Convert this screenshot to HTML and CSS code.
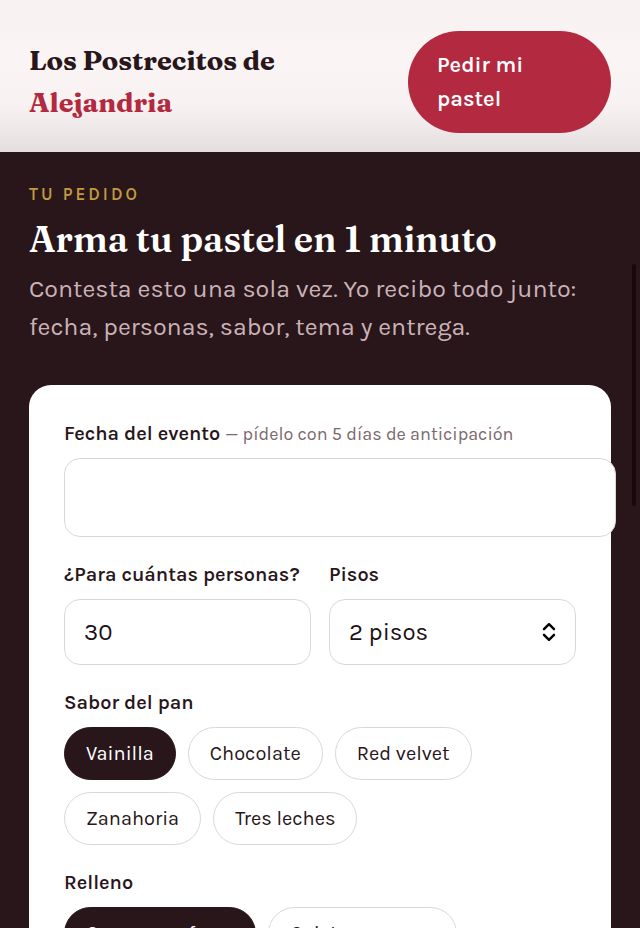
FILE: index.html
```html
<!DOCTYPE html>
<html lang="es">
<head>
<meta charset="utf-8">
<meta name="viewport" content="width=device-width, initial-scale=1">
<title>Los Postrecitos de Alejandria</title>
<link rel="stylesheet" href="styles.css">
</head>
<body>
<header class="topbar">
  <a class="brand" href="#inicio">Los Postrecitos de <span class="brand-accent">Alejandria</span></a>
  <a class="cta" href="#pedido">Pedir mi pastel</a>
</header>
<main class="order" id="pedido">
  <p class="eyebrow">TU PEDIDO</p>
  <h1 class="title">Arma tu pastel en 1 minuto</h1>
  <p class="lead">Contesta esto una sola vez. Yo recibo todo junto: fecha, personas, sabor, tema y entrega.</p>
  <form class="card">
    <div class="field">
      <label class="label" for="fecha">Fecha del evento <span class="hint">— pídelo con 5 días de anticipación</span></label>
      <input class="control control-date" id="fecha" type="text">
    </div>
    <div class="row">
      <div class="field">
        <label class="label" for="personas">¿Para cuántas personas?</label>
        <input class="control" id="personas" type="text" inputmode="numeric" value="30">
      </div>
      <div class="field">
        <label class="label" for="pisos">Pisos</label>
        <div class="select-wrap">
          <select class="control" id="pisos">
            <option>1 piso</option>
            <option selected>2 pisos</option>
            <option>3 pisos</option>
          </select>
          <svg class="chevrons" viewBox="0 0 14 20" aria-hidden="true"><path d="M2 7.2 7 2.2 12 7.2M2 12.8 7 17.8 12 12.8"/></svg>
        </div>
      </div>
    </div>
    <div class="field" role="group" aria-labelledby="sabor">
      <span class="label" id="sabor">Sabor del pan</span>
      <div class="chips">
        <button class="chip chip-on" type="button">Vainilla</button>
        <button class="chip" type="button">Chocolate</button>
        <button class="chip" type="button">Red velvet</button>
        <button class="chip" type="button">Zanahoria</button>
        <button class="chip" type="button">Tres leches</button>
      </div>
    </div>
    <div class="field" role="group" aria-labelledby="relleno">
      <span class="label" id="relleno">Relleno</span>
      <div class="chips">
        <button class="chip chip-on" type="button">Crema con fresa</button>
        <button class="chip" type="button">Cajeta con nuez</button>
      </div>
    </div>
  </form>
</main>
<div class="scroll-thumb"></div>
</body>
</html>
```
FILE: styles.css
```css
*, *::before, *::after { box-sizing: border-box; }

body {
  margin: 0;
  height: 100vh;
  overflow: hidden;
  display: flex;
  flex-direction: column;
  background: #28161a;
  color: #28161a;
  font-family: Karla, Roboto, sans-serif;
}

.topbar {
  flex: none;
  display: flex;
  align-items: center;
  justify-content: space-between;
  gap: 96px;
  padding: 31px 29px 19px;
  background: linear-gradient(#f7f1f1 0, #faf5f4 36%, #f8f3f2 68%, #e5dedf 100%);
}

.brand {
  flex: 1;
  font-family: Fraunces, "Liberation Serif", serif;
  font-size: 27px;
  font-weight: 700;
  line-height: 42px;
  color: #28161a;
  text-decoration: none;
}

.brand-accent { display: block; color: #b3293f; }

.cta {
  width: 203px;
  padding: 17px 72px 17px 29px;
  border-radius: 51px;
  background: #b3293f;
  color: #fff;
  font-size: 22px;
  font-weight: 600;
  line-height: 34px;
  text-decoration: none;
}

.order { flex: none; padding: 31px 29px; }

.eyebrow {
  margin: 0;
  color: #c39b3f;
  font-size: 17px;
  font-weight: 600;
  line-height: 22px;
  letter-spacing: 3px;
}

.title {
  margin: 10px 0 7px;
  color: #fff;
  font-family: Fraunces, "Liberation Serif", serif;
  font-size: 36px;
  font-weight: 600;
  line-height: 48px;
}

.lead {
  margin: 0;
  color: #cbb2b7;
  font-size: 25px;
  line-height: 38px;
}

.card {
  display: flex;
  flex-direction: column;
  gap: 24px;
  margin-top: 39px;
  padding: 35px;
  border-radius: 22px;
  background: #fff;
}

.field { min-width: 0; }

.label {
  display: block;
  margin-bottom: 10px;
  font-size: 20px;
  font-weight: 600;
  line-height: 28px;
}

.hint { color: #7d686d; font-size: 18px; font-weight: 400; }

.control {
  display: block;
  width: 100%;
  height: 66px;
  padding: 0 19px;
  border: 1px solid #ddd6d7;
  border-radius: 16px;
  background: #fff;
  color: #1b1214;
  font-family: inherit;
  font-size: 24px;
  appearance: none;
}

.control-date { box-sizing: content-box; height: 77px; }

.row {
  display: grid;
  grid-template-columns: 1fr 1fr;
  gap: 18px;
}

.select-wrap { display: grid; align-items: center; }
.select-wrap > * { grid-area: 1 / 1; }

.chevrons {
  justify-self: end;
  width: 14px;
  height: 20px;
  margin-right: 20px;
  fill: none;
  stroke: #000;
  stroke-width: 2.4;
  stroke-linecap: round;
  stroke-linejoin: round;
  pointer-events: none;
}

.chips { display: flex; flex-wrap: wrap; gap: 12px; }

.chip {
  height: 53px;
  padding: 0 21px;
  border: 1px solid #ddd6d7;
  border-radius: 27px;
  background: #fff;
  color: #28161a;
  font-family: inherit;
  font-size: 20px;
}

.chip-on { border-color: #28161a; background: #28161a; color: #fff; }

.scroll-thumb {
  position: fixed;
  top: 264px;
  right: 4px;
  width: 4px;
  height: 242px;
  border-radius: 2px;
  background: #19080b;
}
```
